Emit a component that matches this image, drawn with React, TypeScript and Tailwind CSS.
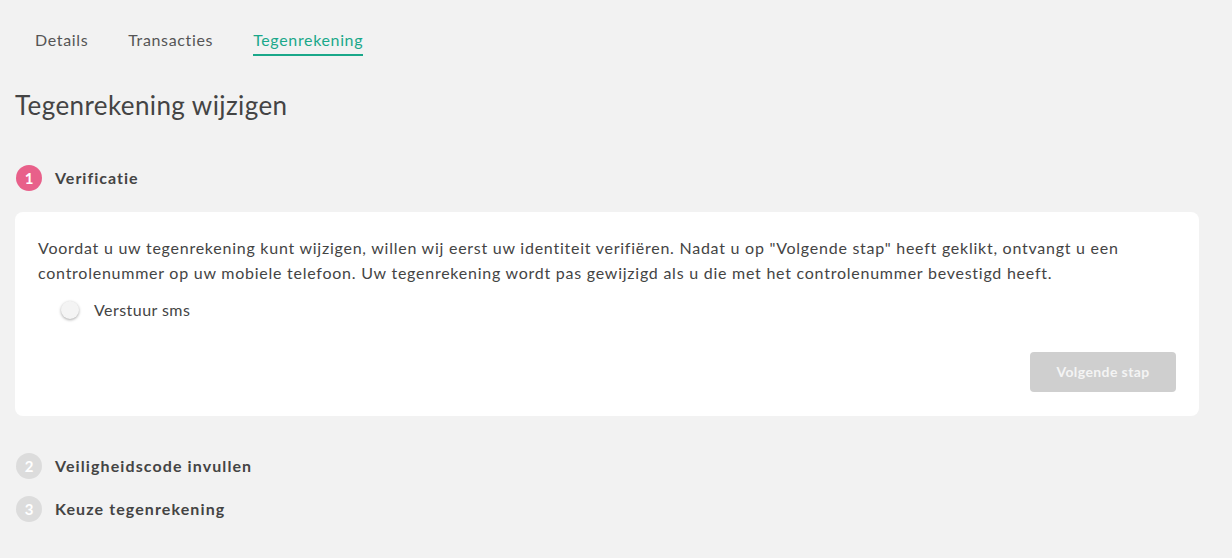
export default function App() {
  const tabs = ["Details", "Transacties", "Tegenrekening"];
  const active = "Tegenrekening";

  return (
    <main className="min-h-[558px] bg-[#f2f2f2] px-[15px] text-[#444] font-['Lato',sans-serif]">
      {/* Tabs */}
      <nav className="flex gap-10 pl-5 pt-[28px]">
        {tabs.map((t) => (
          <div
            key={t}
            className={
              t === active
                ? "border-b-2 border-[#1aa88a] pb-[2px] text-base tracking-[0.65px] text-[#1aa88a]"
                : "pb-[2px] text-base tracking-[0.65px] text-[#555]"
            }
          >
            {t}
          </div>
        ))}
      </nav>

      <h1 className="mt-[33px] text-[26px] leading-[32px] tracking-[0.4px] text-[#444]">Tegenrekening wijzigen</h1>

      {/* Step 1 */}
      <div className="mt-[44px] flex items-center gap-[13px] pl-px">
        <span className="flex h-[26px] w-[26px] items-center justify-center rounded-full bg-[#e8608a] text-[15px] font-bold text-white">
          1
        </span>
        <span className="text-base font-bold tracking-[1px] text-[#444]">Verificatie</span>
      </div>

      <section className="mt-[21px] w-[1184px] rounded-lg bg-white px-[23px] pb-[24px] pt-[23px]">
        <p className="text-base leading-[25px] tracking-[0.75px] text-[#444]">
          Voordat u uw tegenrekening kunt wijzigen, willen wij eerst uw identiteit verifiëren. Nadat u op "Volgende stap"
          heeft geklikt, ontvangt u een controlenummer op uw mobiele telefoon. Uw tegenrekening wordt pas gewijzigd als u
          die met het controlenummer bevestigd heeft.
        </p>
        <label className="mt-[13px] flex items-center gap-[15px] pl-[23px]">
          <span className="h-[18px] w-[18px] rounded-full bg-[#f4f4f4] shadow-[0_1px_3px_rgba(0,0,0,0.35)]" />
          <span className="text-base tracking-[0.45px] text-[#444]">Verstuur sms</span>
        </label>
        <div className="mt-[30px] flex justify-end">
          <button className="h-10 w-[146px] rounded bg-[#cfcfcf] text-sm font-bold tracking-[0.4px] text-[#f4f4f4]">
            Volgende stap
          </button>
        </div>
      </section>

      {/* Steps 2 & 3 */}
      <div className="mt-[37px] flex flex-col gap-[17px] pl-px">
        {["Veiligheidscode invullen", "Keuze tegenrekening"].map((s, i) => (
          <div key={s} className="flex items-center gap-[13px]">
            <span className="flex h-[26px] w-[26px] items-center justify-center rounded-full bg-[#dcdcdc] text-[15px] font-bold text-white">
              {i + 2}
            </span>
            <span className="text-base font-bold tracking-[1.1px] text-[#444]">{s}</span>
          </div>
        ))}
      </div>
    </main>
  );
}
